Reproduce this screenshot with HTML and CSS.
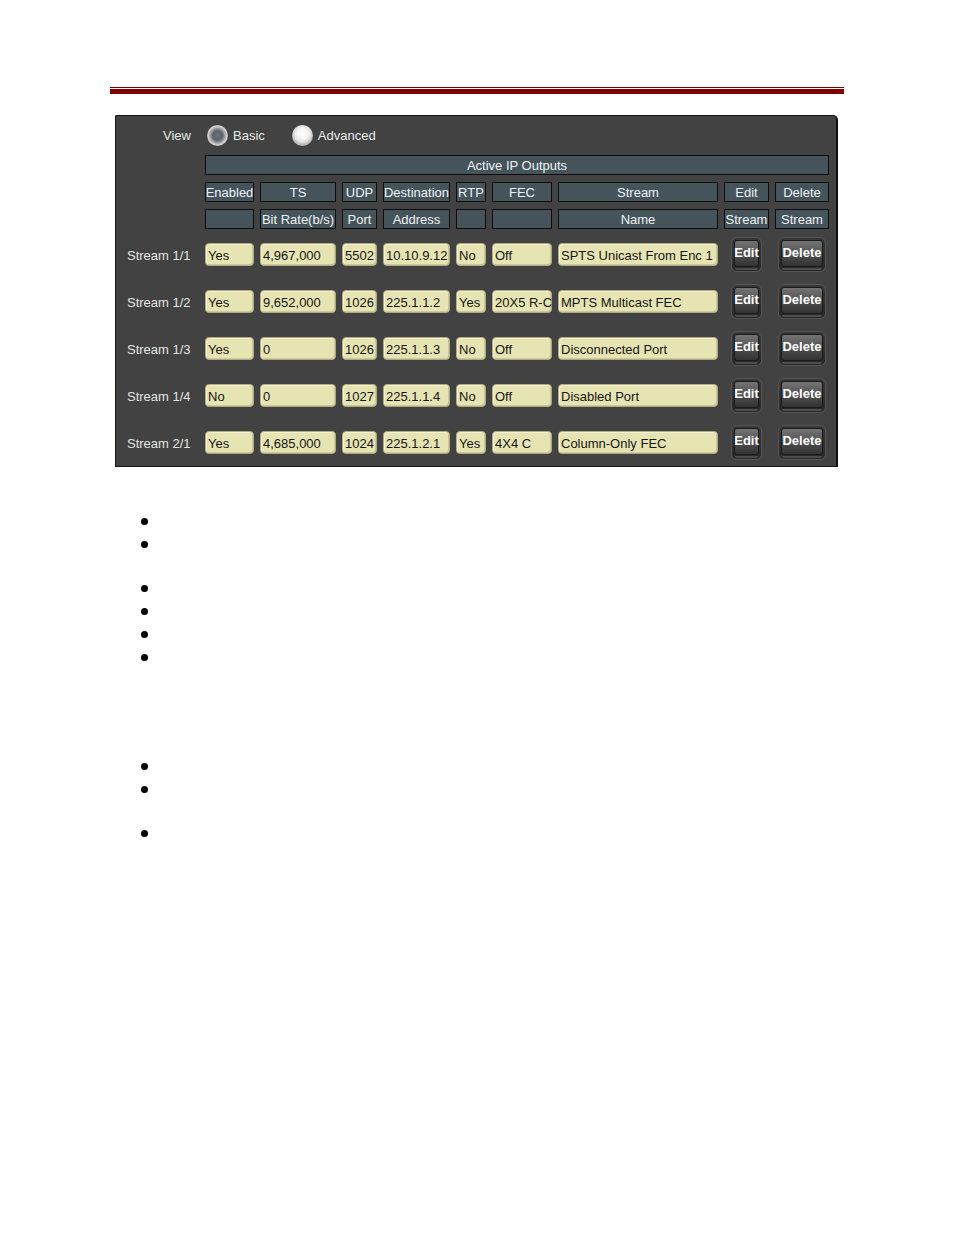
FILE: index.html
```html
<!DOCTYPE html>
<html lang="en">
<head>
<meta charset="utf-8">
<title>Active IP Outputs</title>
<link rel="stylesheet" href="styles.css">
</head>
<body>
<div class="page">
  <div class="rule">
    <div class="rule-thin"></div>
    <div class="rule-thick"></div>
  </div>

  <div class="panel">
    <div class="cols view-row">
      <div class="label view-label">View</div>
      <div class="radios">
        <span class="radio radio-on"></span><span class="radio-text">Basic</span>
        <span class="radio radio-off"></span><span class="radio-text">Advanced</span>
      </div>
    </div>

    <div class="cols title-row">
      <div class="hcell span-all">Active IP Outputs</div>
    </div>

    <div class="cols head-row">
      <div></div>
      <div class="hcell">Enabled</div>
      <div class="hcell">TS</div>
      <div class="hcell">UDP</div>
      <div class="hcell">Destination</div>
      <div class="hcell">RTP</div>
      <div class="hcell">FEC</div>
      <div class="hcell">Stream</div>
      <div class="hcell">Edit</div>
      <div class="hcell">Delete</div>
    </div>

    <div class="cols head-row">
      <div></div>
      <div class="hcell"></div>
      <div class="hcell">Bit Rate(b/s)</div>
      <div class="hcell">Port</div>
      <div class="hcell">Address</div>
      <div class="hcell"></div>
      <div class="hcell"></div>
      <div class="hcell">Name</div>
      <div class="hcell">Stream</div>
      <div class="hcell">Stream</div>
    </div>

    <div class="rows">
      <div class="cols data-row">
        <div class="label">Stream 1/1</div>
        <div class="field">Yes</div>
        <div class="field">4,967,000</div>
        <div class="field">5502</div>
        <div class="field">10.10.9.12</div>
        <div class="field">No</div>
        <div class="field">Off</div>
        <div class="field">SPTS Unicast From Enc 1</div>
        <div class="btn-cell"><div class="btn btn-edit"><div class="btn-face">Edit</div><div class="btn-lip"></div></div></div>
        <div class="btn-cell"><div class="btn btn-delete"><div class="btn-face">Delete</div><div class="btn-lip"></div></div></div>
      </div>

      <div class="cols data-row">
        <div class="label">Stream 1/2</div>
        <div class="field">Yes</div>
        <div class="field">9,652,000</div>
        <div class="field">1026</div>
        <div class="field">225.1.1.2</div>
        <div class="field">Yes</div>
        <div class="field">20X5 R-C</div>
        <div class="field">MPTS Multicast FEC</div>
        <div class="btn-cell"><div class="btn btn-edit"><div class="btn-face">Edit</div><div class="btn-lip"></div></div></div>
        <div class="btn-cell"><div class="btn btn-delete"><div class="btn-face">Delete</div><div class="btn-lip"></div></div></div>
      </div>

      <div class="cols data-row">
        <div class="label">Stream 1/3</div>
        <div class="field">Yes</div>
        <div class="field">0</div>
        <div class="field">1026</div>
        <div class="field">225.1.1.3</div>
        <div class="field">No</div>
        <div class="field">Off</div>
        <div class="field">Disconnected Port</div>
        <div class="btn-cell"><div class="btn btn-edit"><div class="btn-face">Edit</div><div class="btn-lip"></div></div></div>
        <div class="btn-cell"><div class="btn btn-delete"><div class="btn-face">Delete</div><div class="btn-lip"></div></div></div>
      </div>

      <div class="cols data-row">
        <div class="label">Stream 1/4</div>
        <div class="field">No</div>
        <div class="field">0</div>
        <div class="field">1027</div>
        <div class="field">225.1.1.4</div>
        <div class="field">No</div>
        <div class="field">Off</div>
        <div class="field">Disabled Port</div>
        <div class="btn-cell"><div class="btn btn-edit"><div class="btn-face">Edit</div><div class="btn-lip"></div></div></div>
        <div class="btn-cell"><div class="btn btn-delete"><div class="btn-face">Delete</div><div class="btn-lip"></div></div></div>
      </div>

      <div class="cols data-row">
        <div class="label">Stream 2/1</div>
        <div class="field">Yes</div>
        <div class="field">4,685,000</div>
        <div class="field">1024</div>
        <div class="field">225.1.2.1</div>
        <div class="field">Yes</div>
        <div class="field">4X4 C</div>
        <div class="field">Column-Only FEC</div>
        <div class="btn-cell"><div class="btn btn-edit"><div class="btn-face">Edit</div><div class="btn-lip"></div></div></div>
        <div class="btn-cell"><div class="btn btn-delete"><div class="btn-face">Delete</div><div class="btn-lip"></div></div></div>
      </div>
    </div>
  </div>

  <div class="notes">
    <ul class="bullets g1"><li></li><li></li></ul>
    <ul class="bullets g2"><li></li><li></li><li></li><li></li></ul>
    <ul class="bullets g3"><li></li><li></li></ul>
    <ul class="bullets g4"><li></li></ul>
  </div>
</div>
</body>
</html>
```

FILE: styles.css
```css
html, body {
  margin: 0;
  padding: 0;
  background: #ffffff;
}

body {
  font-family: "Liberation Sans", Arial, sans-serif;
  font-size: 13px;
}

.page {
  width: 734px;
  margin-left: 110px;
  padding-top: 87px;
}

/* top rule */
.rule {
  display: flex;
  flex-direction: column;
  gap: 1px;
}
.rule-thin {
  height: 1px;
  background: #7d0000;
}
.rule-thick {
  height: 5px;
  background: #800000;
}

/* panel */
.panel {
  margin-top: 21px;
  margin-left: 5px;
  width: 723px;
  box-sizing: border-box;
  background: #424242;
  border: 1px solid #151515;
  border-right: 2px solid #101010;
  border-radius: 2px 5px 0 0;
  padding: 0 7px 0 11px;
  color: #e6e6e6;
}

.cols {
  display: grid;
  grid-template-columns: 72px 49px 76px 35px 67px 30px 60px 160px 45px 54px;
  column-gap: 6px;
}

.view-row {
  margin-top: 3px;
  height: 32px;
  align-items: center;
}

.label {
  color: #e4e4e4;
  white-space: nowrap;
}

.data-row .label {
  padding-top: 2px;
}

.view-label {
  text-align: right;
  padding-right: 8px;
}

.radios {
  grid-column: 2 / -1;
  display: flex;
  align-items: center;
}

.radio {
  width: 21px;
  height: 21px;
  border-radius: 50%;
  box-sizing: border-box;
  flex: none;
}
.radio-on {
  margin-left: 2px;
  background: radial-gradient(circle at 50% 50%, #6a7680 0, #58646e 4.5px, #727272 5.5px, #a4a4a4 7.5px, #d6d6d6 9.5px, #b0b0b0 10.5px);
}
.radio-off {
  margin-left: 27px;
  background: radial-gradient(circle at 50% 42%, #ffffff 0, #f6f6f6 5px, #e4e4e4 8px, #bdbdbd 10.5px);
}
.radio-text {
  margin-left: 5px;
  color: #e8e8e8;
}

.title-row {
  margin-top: 4px;
}

.head-row {
  margin-top: 7px;
}

.hcell {
  height: 20px;
  box-sizing: border-box;
  background: #45535b;
  border: 1px solid #0d0d0d;
  color: #eef2f4;
  display: flex;
  align-items: center;
  justify-content: center;
  white-space: nowrap;
}

.span-all {
  grid-column: 2 / -1;
}

.rows {
  margin-top: 2px;
}

.data-row {
  height: 47px;
  align-items: center;
}

.field {
  height: 23px;
  box-sizing: border-box;
  background: #e6e4b2;
  border: 1px solid #aeaa82;
  border-radius: 4px;
  box-shadow: inset 1px 1px 0 #f4f2cf, inset -1px -1px 0 #cbc89c;
  color: #161616;
  padding-left: 2px;
  padding-top: 2px;
  display: flex;
  align-items: center;
  white-space: nowrap;
}

.btn-cell {
  display: flex;
  justify-content: center;
  align-items: center;
}

.btn {
  height: 35px;
  box-sizing: border-box;
  padding: 2px 2px 0;
  border: 1px solid #565656;
  border-radius: 6px;
  background: linear-gradient(#383838, #282828);
  display: flex;
  flex-direction: column;
}
.btn-edit {
  width: 31px;
}
.btn-delete {
  width: 48px;
}
.btn-face {
  height: 27px;
  box-sizing: border-box;
  border: 1px solid #1a1a1a;
  border-radius: 3px;
  background: linear-gradient(#747474 0%, #5c5c5c 35%, #444444 70%, #333333 100%);
  color: #ffffff;
  font-weight: bold;
  font-size: 13px;
  display: flex;
  justify-content: center;
  align-items: center;
  padding-bottom: 3px;
  white-space: nowrap;
}
.btn-lip {
  height: 2px;
  margin: 1px 1px 0;
  border-radius: 0 0 2px 2px;
  background: #4d4d4d;
}

/* bullets */
.bullets {
  list-style: none;
  margin: 0;
  padding: 0;
}
.bullets li {
  height: 23px;
  display: flex;
  align-items: center;
}
.bullets li::before {
  content: "";
  width: 7px;
  height: 7px;
  margin-left: 31px;
  border-radius: 50%;
  background: #000000;
}
.g1 { margin-top: 43px; }
.g2 { margin-top: 21px; }
.g3 { margin-top: 86px; }
.g4 { margin-top: 21px; }
```
